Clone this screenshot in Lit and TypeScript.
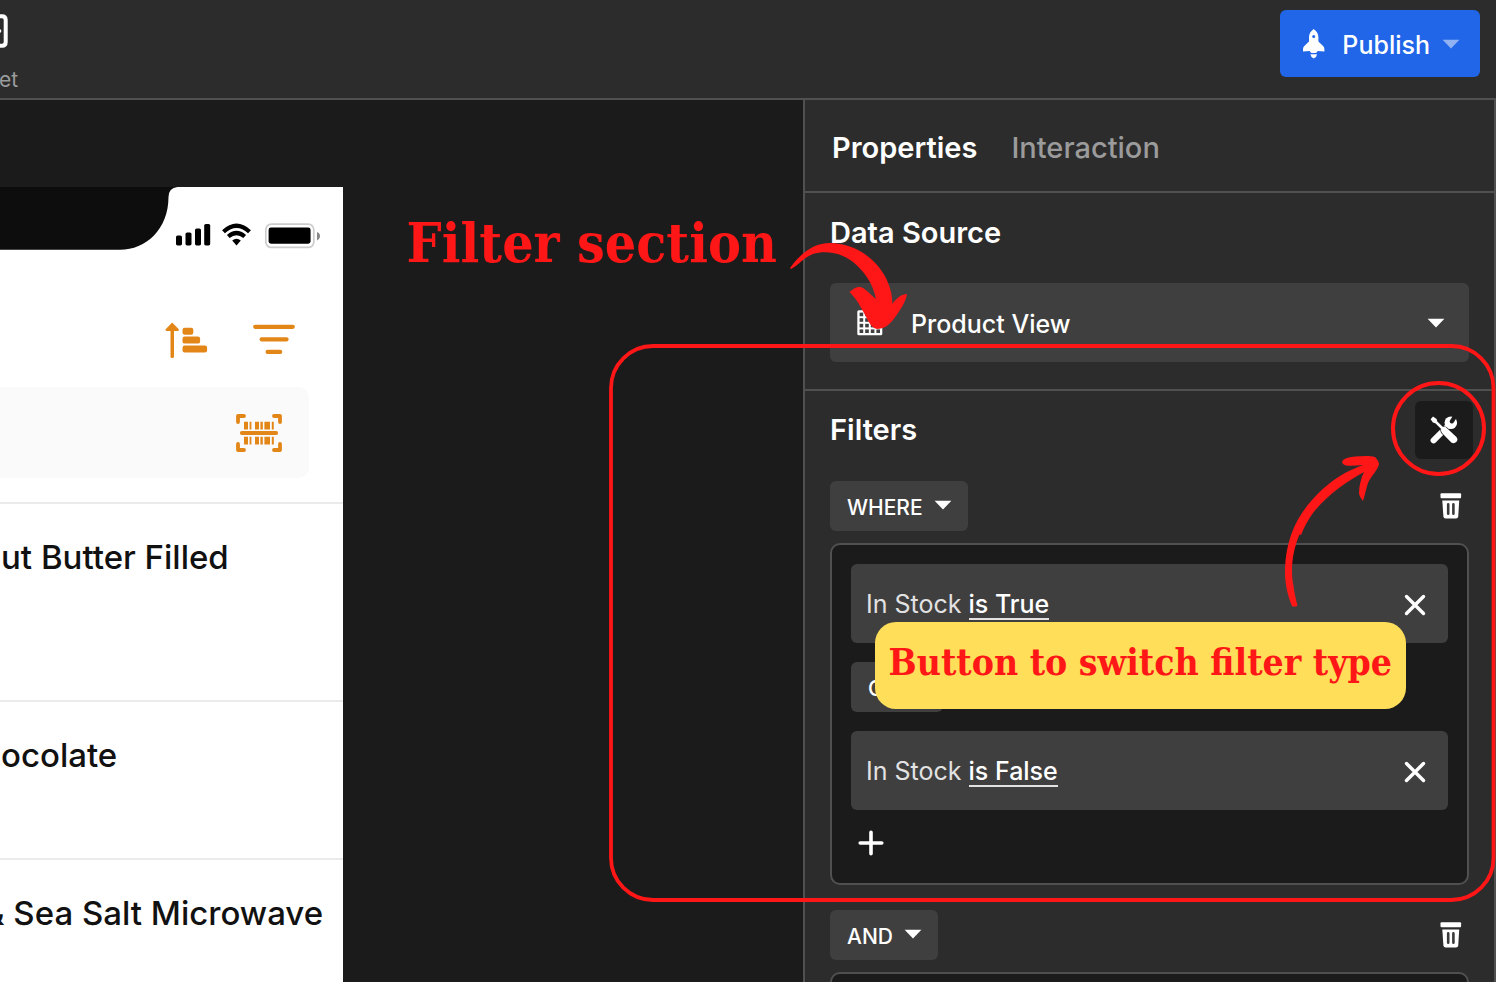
import { LitElement, html, css, svg } from "lit";
import { customElement } from "lit/decorators.js";

const caret = html`<svg class="caret" width="18" height="10" viewBox="0 0 18 10" aria-hidden="true">
  <path d="M0.6 0.8H17.4L9 9.4Z" fill="currentColor" />
</svg>`;

const trashIcon = html`<svg width="22" height="26" viewBox="0 0 22 26" aria-hidden="true">
  <rect x="0.5" y="0.3" width="20.6" height="5" rx="1" fill="#fff" />
  <path d="M2.3 7.4H19.2L18.2 23.6Q18 25.6 16 25.6H5.6Q3.6 25.6 3.4 23.6Z" fill="#fff" />
  <path d="M8.2 11.400V20.800M13.4 11.400V20.800" stroke="#3a3a3a" stroke-width="2.6" stroke-linecap="round" />
</svg>`;

const closeIcon = html`<svg width="22" height="22" viewBox="0 0 22 22" aria-hidden="true">
  <path d="M2.5 2.5L19.5 19.5M19.5 2.5L2.5 19.5" stroke="#fff" stroke-width="3.4" stroke-linecap="round" />
</svg>`;

const plusIcon = html`<svg width="26" height="26" viewBox="0 0 26 26" aria-hidden="true">
  <path d="M13 2.2V23.8M2.2 13H23.8" stroke="#fff" stroke-width="3.6" stroke-linecap="round" />
</svg>`;

const rocketIcon = html`<svg width="22" height="30" viewBox="0 0 22 30" aria-hidden="true">
  <path
    fill="#fff"
    fill-rule="evenodd"
    d="M10.7 0C13.6 2 15.4 4.8 15.4 8V12.4L20.3 17.2Q21.4 18.4 21.4 20V22.6L14.6 22C14.2 23.2 13.4 24 12.4 24H9C8 24 7.2 23.2 6.8 22L0 22.6V20Q0 18.4 1.1 17.2L6 12.4V8C6 4.8 7.8 2 10.7 0ZM10.7 6.1a1.5 1.5 0 1 0 0 3a1.5 1.5 0 1 0 0-3Z"
  />
  <path fill="#fff" d="M7.4 25.2H14Q13.8 28 10.7 29.6Q7.600 28 7.400 25.200Z" />
</svg>`;

const gridIcon = html`<svg width="26" height="26" viewBox="0 0 26 26" aria-hidden="true">
  <rect x="0.300" y="0.300" width="25" height="25" rx="1.500" fill="#fff" />
  ${[0, 1, 2, 3].map((r) =>
    [0, 1, 2, 3].map(
      (c) => svg`<rect x=${2.6 + c * 5.6} y=${2.6 + r * 5.6} width="3.600" height="3.600" fill="#3f3f3f" />`
    )
  )}
</svg>`;

const toolsIcon = html`<svg width="28" height="28" viewBox="0 0 28 28" aria-hidden="true">
  <path d="M3.600 24.400L17.500 10.500" stroke="#fff" stroke-width="6" stroke-linecap="round" />
  <circle cx="20.800" cy="6.800" r="6.300" fill="#fff" />
  <path d="M21.900 5.400L25.600 -0.600" stroke="#1b1b1b" stroke-width="4.200" stroke-linecap="round" />
  <path
    d="M0.600 3.200L3 0.500L6.600 2.900L7.300 5.400L13 11Q15.200 10.400 17 12.200L26.400 21Q28.400 23.600 26.500 25.800Q24 28.200 21.300 26.400L12.300 17.200Q10.600 15.400 11.200 13L5.300 7.200L2.900 6.600Z"
    fill="#fff"
    stroke="#1b1b1b"
    stroke-width="1.400"
    paint-order="stroke"
    stroke-linejoin="round"
  />
</svg>`;

const sortIcon = html`<svg width="43" height="37" viewBox="0 0 43 37" aria-hidden="true" fill="#e38618">
  <path d="M7.200 0.500L14 7.600Q14 9 12.800 9H1.600Q0.400 9 0.400 7.600Z" />
  <rect x="5.500" y="6" width="3.500" height="30" rx="1.600" />
  <rect x="17.500" y="5.800" width="10.800" height="7" rx="2.200" />
  <rect x="17.500" y="14.600" width="17.600" height="7" rx="2.200" />
  <rect x="17.500" y="23.500" width="24.600" height="7" rx="2.200" />
</svg>`;

const filterIcon = html`<svg width="42" height="32" viewBox="0 0 42 32" aria-hidden="true">
  <path
    d="M2.200 2.800H39.800M8.600 15.300H33.600M14.600 27.900H27.200"
    stroke="#e38618"
    stroke-width="4.200"
    stroke-linecap="round"
  />
</svg>`;

const bars = [
  [8, 4],
  [13.6, 1.8],
  [19, 4],
  [24.4, 2.4],
  [28.4, 5.6],
  [35.8, 2],
];

const barcodeIcon = html`<svg width="46" height="38" viewBox="0 0 46 38" aria-hidden="true">
  <path
    d="M8 2H2V8M38 2H44V8M8 36H2V30M38 36H44V30"
    fill="none"
    stroke="#e38618"
    stroke-width="3.800"
    stroke-linecap="round"
    stroke-linejoin="round"
  />
  <path d="M5.800 19H40.200" stroke="#e38618" stroke-width="3.800" stroke-linecap="round" />
  ${bars.map(
    ([x, w]) => svg`<path d="M${x} 7.800h${w}v7.600h${-w}zM${x} 22.800h${w}v7.600h${-w}z" fill="#e38618" />`
  )}
</svg>`;

const statusIcons = html`<svg width="146" height="26" viewBox="0 0 146 26" aria-hidden="true">
  <rect x="1" y="12.600" width="6" height="9.800" rx="1.600" />
  <rect x="10.500" y="9.400" width="6" height="13" rx="1.600" />
  <rect x="20" y="5.600" width="6" height="16.800" rx="1.600" />
  <rect x="29.200" y="1" width="6" height="21.400" rx="1.600" />
  <path d="M48.500 8.700Q61.500 -3.300 74.500 8.700" fill="none" stroke="#000" stroke-width="4.200" />
  <path d="M53.300 13.500Q61.500 6.500 69.700 13.500" fill="none" stroke="#000" stroke-width="4.200" />
  <path d="M57.200 17.400Q61.500 14 65.800 17.400L61.500 22.400Z" />
  <rect x="90.800" y="1.200" width="48" height="23.200" rx="5.500" fill="none" stroke="#ccc" stroke-width="1.700" />
  <rect x="93.600" y="4.500" width="42" height="16.200" rx="2.400" />
  <path d="M142 9Q145 10 145 13Q145 16 142 17.400Z" fill="#888" />
</svg>`;

@customElement("phone-preview")
export class PhonePreview extends LitElement {
  static styles = css`
    :host {
      display: block;
      background: #fff;
      color: #111;
      font-family: Inter, "Liberation Sans", sans-serif;
      overflow: hidden;
    }
    .status {
      display: flex;
      justify-content: space-between;
      height: 64px;
      padding-right: 22px;
    }
    .notch {
      flex: none;
      display: block;
      margin-right: -4px;
    }
    .status-icons {
      display: flex;
      padding-top: 36px;
    }
    .actions {
      display: flex;
      justify-content: flex-end;
      align-items: center;
      gap: 45px;
      padding: 68px 48px 0 0;
      height: 42px;
    }
    button {
      display: flex;
      border: 0;
      padding: 0;
      background: none;
      cursor: pointer;
    }
    .search {
      display: flex;
      align-items: center;
      height: 91px;
      margin: 26px 34px 24px 0;
      padding-right: 27px;
      border-radius: 0 10px 10px 0;
      background: #fafafa;
    }
    .search input {
      flex: 1;
      min-width: 0;
      height: 100%;
      border: 0;
      padding: 0;
      background: none;
      font: inherit;
      outline: none;
    }
    .list {
      margin: 0;
      padding: 0;
      list-style: none;
    }
    .item {
      box-sizing: border-box;
      min-height: 158px;
      padding: 32px 0 0 1px;
      border-top: 2px solid #ebebeb;
      font-size: 33px;
      line-height: 42px;
      font-weight: 500;
      white-space: nowrap;
    }
    .tall {
      min-height: 198px;
    }
    .cut {
      text-indent: -18px;
    }
  `;

  render() {
    return html`
      <div class="status">
        <svg class="notch" width="178" height="63" viewBox="0 0 178 63" aria-hidden="true">
          <path d="M0 0H177.500Q168.500 1 168.500 10C168.500 42 146 62.800 120 62.800H0Z" fill="#0d0d0d" />
        </svg>
        <div class="status-icons">${statusIcons}</div>
      </div>
      <div class="actions">
        <button aria-label="Sort">${sortIcon}</button>
        <button aria-label="Filter">${filterIcon}</button>
      </div>
      <div class="search">
        <input type="search" aria-label="Search" />
        <button aria-label="Scan barcode">${barcodeIcon}</button>
      </div>
      <ul class="list">
        <li class="item tall">ut Butter Filled</li>
        <li class="item">ocolate</li>
        <li class="item cut">&amp; Sea Salt Microwave</li>
      </ul>
    `;
  }
}

@customElement("properties-panel")
export class PropertiesPanel extends LitElement {
  static styles = css`
    :host {
      display: block;
      box-sizing: border-box;
      border: 2px solid #505050;
      border-width: 0 2px;
      background: #2c2c2c;
      color: #fff;
      font-family: Inter, "Liberation Sans", sans-serif;
      font-size: 25px;
    }
    button,
    select {
      border: 0;
      margin: 0;
      font: inherit;
      color: inherit;
      cursor: pointer;
    }
    button {
      display: flex;
      padding: 0;
      background: none;
    }
    svg {
      display: block;
    }
    .tabs {
      display: flex;
      align-items: center;
      gap: 34px;
      box-sizing: border-box;
      min-height: 93px;
      padding: 5px 0 0 27px;
      border-bottom: 2px solid #505050;
    }
    .tab {
      font-size: 29px;
      line-height: 36px;
      font-weight: 500;
      color: #9b9b9b;
    }
    .active {
      font-weight: 600;
      color: #fff;
    }
    h2 {
      margin: 0;
      font-size: 29px;
      line-height: 36px;
      font-weight: 600;
    }
    .section {
      padding: 22px 25px 27px 25px;
      border-bottom: 2px solid #505050;
    }
    .source {
      position: relative;
      display: flex;
      align-items: center;
      margin-top: 32px;
    }
    .source select {
      appearance: none;
      width: 100%;
      height: 79px;
      padding: 2px 60px 0 81px;
      border-radius: 6px;
      background: #3f3f3f;
      font-weight: 500;
    }
    .source .grid {
      position: absolute;
      left: 27px;
    }
    .source .caret {
      position: absolute;
      right: 24px;
    }
    .filters {
      padding: 10px 25px 0 25px;
    }
    .heading,
    .clause {
      display: flex;
      align-items: center;
      justify-content: space-between;
    }
    .heading button {
      align-items: center;
      justify-content: center;
      width: 58px;
      height: 58px;
      margin-right: -4px;
      border-radius: 6px;
      background: #1b1b1b;
    }
    .clause {
      margin: 22px 7px 12px 0;
    }
    .clause.next {
      margin-top: 25px;
    }
    .chip {
      position: relative;
      display: inline-flex;
      align-items: center;
    }
    .chip select {
      appearance: none;
      height: 50px;
      padding: 2px 45px 0 17px;
      border-radius: 6px;
      background: #3f3f3f;
      font-size: 21px;
      font-weight: 500;
    }
    .chip .caret {
      position: absolute;
      right: 16px;
      top: 19px;
    }
    .caret {
      pointer-events: none;
    }
    .group {
      display: flex;
      flex-direction: column;
      align-items: flex-start;
      gap: 19px;
      padding: 19px;
      border: 2px solid #505050;
      border-radius: 10px;
      background: #1b1b1b;
    }
    .rule {
      box-sizing: border-box;
      display: flex;
      align-items: center;
      width: 100%;
      height: 79px;
      padding: 3px 22px 0 15px;
      border-radius: 6px;
      background: #3f3f3f;
      color: #e2e2e2;
      line-height: 28px;
      white-space: pre;
    }
    .rule .field,
    .rule .op {
      border-bottom: 2px solid transparent;
    }
    .rule .op {
      border-color: #e2e2e2;
      font-weight: 500;
      color: #fff;
    }
    .rule .remove {
      margin-left: auto;
    }
    .add {
      margin: 1px 0 8px 7px;
    }
  `;

  private rule(field: string, condition: string) {
    return html`<div class="rule"
      ><span class="field">${field} </span><button class="op">${condition}</button
      ><button class="remove" aria-label="Remove condition">${closeIcon}</button></div
    >`;
  }

  private chip(text: string) {
    return html`<span class="chip"
      ><select aria-label="Operator"><option>${text}</option></select>${caret}</span
    >`;
  }

  render() {
    return html`
      <div class="tabs" role="tablist">
        <button class="tab active" role="tab" aria-selected="true">Properties</button>
        <button class="tab" role="tab" aria-selected="false">Interaction</button>
      </div>
      <section class="section">
        <h2 id="source-title">Data Source</h2>
        <div class="source">
          <select aria-labelledby="source-title"><option>Product View</option></select>
          <span class="grid">${gridIcon}</span>
          ${caret}
        </div>
      </section>
      <section class="filters">
        <div class="heading">
          <h2>Filters</h2>
          <button aria-label="Switch filter type">${toolsIcon}</button>
        </div>
        <div class="clause">
          ${this.chip("WHERE")}
          <button aria-label="Delete group">${trashIcon}</button>
        </div>
        <div class="group">
          ${this.rule("In Stock", "is True")} ${this.chip("OR")} ${this.rule("In Stock", "is False")}
          <button class="add" aria-label="Add condition">${plusIcon}</button>
        </div>
        <div class="clause next">
          ${this.chip("AND")}
          <button aria-label="Delete group">${trashIcon}</button>
        </div>
        <div class="group"></div>
      </section>
    `;
  }
}

@customElement("app-root")
export class AppRoot extends LitElement {
  static styles = css`
    :host {
      display: flex;
      flex-direction: column;
      box-sizing: border-box;
      height: 100vh;
      padding-right: 16px;
      overflow: hidden;
      background: #fff;
      font-family: Inter, "Liberation Sans", sans-serif;
    }
    .topbar {
      flex: none;
      display: flex;
      justify-content: space-between;
      align-items: flex-start;
      padding: 10px 16px 5px 0;
      border-bottom: 2px solid #505050;
      background: #2c2c2c;
    }
    .crumb {
      display: flex;
      flex-direction: column;
      gap: 19px;
      padding-top: 4px;
      color: #9b9b9b;
      font-size: 21px;
      line-height: 26px;
      text-indent: -1px;
    }
    .publish {
      display: flex;
      align-items: center;
      height: 67px;
      padding: 0 20px 0 23px;
      border: 0;
      border-radius: 6px;
      background: #2166e8;
      color: #fff;
      font: 500 25px/32px Inter, "Liberation Sans", sans-serif;
      cursor: pointer;
    }
    .publish .text {
      margin: 2px 12px 0 17px;
    }
    .publish .caret {
      color: #90b2f3;
    }
    .workspace {
      position: relative;
      flex: 1;
      min-height: 0;
      display: flex;
      overflow: hidden;
      background: #1b1b1b;
    }
    .canvas {
      flex: 1;
      display: flex;
      padding-top: 87px;
    }
    .phone {
      width: 343px;
    }
    .panel {
      flex: 0 0 693px;
    }
    .marks {
      position: absolute;
      top: 0;
      right: 0;
      pointer-events: none;
    }
    .note {
      position: absolute;
      margin: 0;
      color: #ff1616;
      font-family: "DejaVu Serif Condensed", "DejaVu Serif", serif;
      font-weight: 700;
      white-space: nowrap;
    }
    .title {
      top: 111px;
      right: 719px;
      font-size: 55px;
      line-height: 64px;
    }
    .tip {
      top: 522px;
      right: 90px;
      padding: 16px 14px 23px;
      border-radius: 21px;
      background: #ffde59;
      font-size: 37px;
      line-height: 48px;
    }
  `;

  render() {
    return html`
      <header class="topbar">
        <div class="crumb">
          <svg width="8" height="34" viewBox="0 0 8 34" aria-hidden="true">
            <path d="M-4 2.200H2Q5.700 2.200 5.700 6V28Q5.700 31.800 2 31.800H-4" fill="none" stroke="#fff" stroke-width="4" />
            <circle cx="-0.400" cy="17" r="1.700" fill="#fff" />
          </svg>
          <span>et</span>
        </div>
        <button class="publish">${rocketIcon}<span class="text">Publish</span>${caret}</button>
      </header>
      <main class="workspace">
        <div class="canvas"><phone-preview class="phone"></phone-preview></div>
        <properties-panel class="panel"></properties-panel>
        <svg class="marks" width="896" height="882" viewBox="600 100 896 882" aria-hidden="true">
          <rect x="611" y="346" width="882.500" height="554" rx="42" fill="none" stroke="#ff1616" stroke-width="3.800" />
          <circle cx="1438.500" cy="428.500" r="45.500" fill="none" stroke="#ff1616" stroke-width="4" />
          <path
            fill="#ff1616"
            d="M790 268C800 254 813 243 830 243C862 243 892 270 892.500 304C896 298 902 294 907 294C906 302 899 312 893 320C889 325 884 329 877 329C870 328 868 319 860 306C857 300 853 296 849.500 292C854 288 858 286 862 287.500C867 290 872 296 876 299C873 283 863 270 853 262C842 253 826 250 813 254C804 257 798 266 791 269Z"
          />
          <path
            fill="#ff1616"
            d="M1342 462C1343 458 1350 457 1355 456.500C1362 456 1370 455.500 1375 457C1377 459 1379 462 1379 464C1378 470 1371 476 1368 483C1366 489 1365 495 1363 501C1361 498 1359 496 1359 493C1359 486 1361 478 1364 472C1347 481 1325 497 1313 513C1308 520 1304 527 1301 535L1299.500 534.500C1293 550 1291 565 1292.500 580C1293 584 1294 587 1294 590C1295 595 1296 600 1297.500 605.500C1296 607 1293 607 1292 606C1288 597 1285 584 1285 573C1285 556 1288 542 1293 530C1301 510 1320 487 1345 473C1351 470 1357 467 1363 465C1357 465.500 1351 466 1346 465.500C1344 465 1342.500 464 1342 462Z"
          />
        </svg>
        <p class="note title">Filter section</p>
        <p class="note tip">Button to switch filter type</p>
      </main>
    `;
  }
}
